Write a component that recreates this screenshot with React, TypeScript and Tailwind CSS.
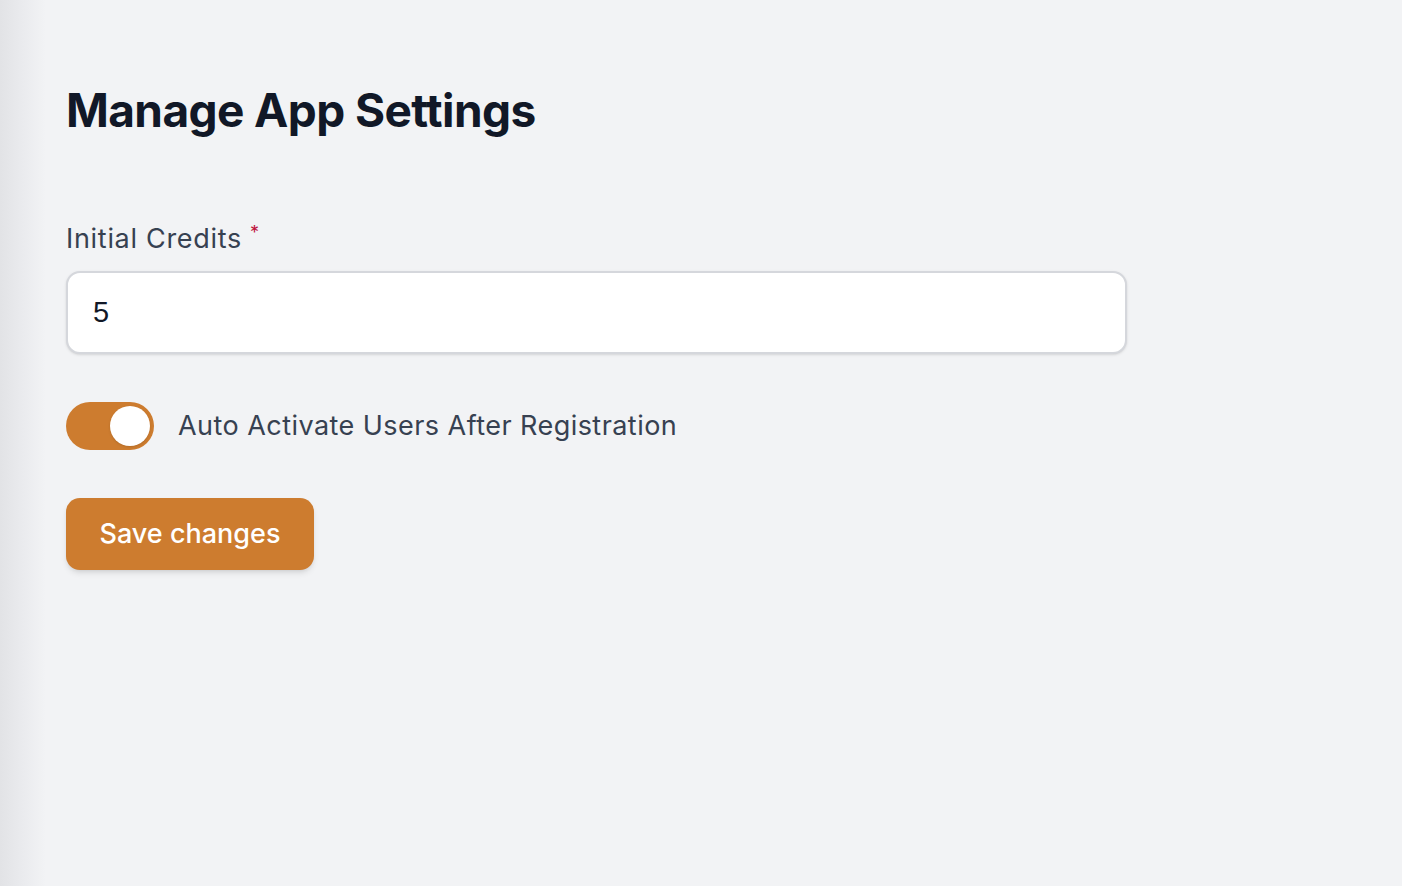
import { useState } from 'react';

export default function App() {
  const [credits, setCredits] = useState('5');
  const [autoActivate, setAutoActivate] = useState(true);

  return (
    <div className="flex min-h-[886px] w-full bg-[#f2f3f5]" style={{ fontFamily: 'Inter, "Noto Sans", sans-serif' }}>
      {/* sidebar shadow edge */}
      <div className="w-[46px] shrink-0 bg-gradient-to-r from-[#e2e3e6] via-[#eaebee] to-[#f2f3f5]" />

      <main className="flex-1 pl-[20px] pt-[82px]">
        <h1 className="text-[46px] font-bold leading-[56px] tracking-[-0.6px] text-[#111827]">
          Manage App Settings
        </h1>

        <form className="mt-[83px] w-[1061px]" onSubmit={(e) => e.preventDefault()}>
          {/* Initial Credits */}
          <label className="flex items-start text-[27px] leading-[36px] tracking-[0.7px] text-[#374151]">
            Initial Credits
            <span className="ml-[8px] -mt-[6px] text-[18px] text-[#be123c]">*</span>
          </label>
          <input
            type="number"
            value={credits}
            onChange={(e) => setCredits(e.target.value)}
            className="mt-[14px] block h-[83px] w-full rounded-[14px] border-2 border-[#d5d7dc] bg-white px-[25px] text-[29px] text-[#111827] shadow-sm outline-none [appearance:textfield]"
            style={{ fontFamily: '"Liberation Sans", Arial, sans-serif' }}
          />

          {/* Auto activate toggle */}
          <div className="mt-[48px] flex items-center gap-[24px]">
            <button
              type="button"
              role="switch"
              aria-checked={autoActivate}
              onClick={() => setAutoActivate(!autoActivate)}
              className={`relative flex h-[48px] w-[88px] shrink-0 items-center rounded-full p-[4px] transition-colors ${
                autoActivate ? 'bg-[#cd7c2f]' : 'bg-gray-300'
              }`}
            >
              <span
                className={`block h-[40px] w-[40px] rounded-full bg-white shadow transition-transform ${
                  autoActivate ? 'translate-x-[40px]' : 'translate-x-0'
                }`}
              />
            </button>
            <span className="text-[27px] tracking-[0.45px] text-[#374151]">Auto Activate Users After Registration</span>
          </div>

          {/* Save */}
          <button
            type="submit"
            className="mt-[48px] h-[72px] w-[248px] rounded-[14px] bg-[#cd7c2f] text-[27px] font-medium text-white shadow-md"
          >
            Save changes
          </button>
        </form>
      </main>
    </div>
  );
}
